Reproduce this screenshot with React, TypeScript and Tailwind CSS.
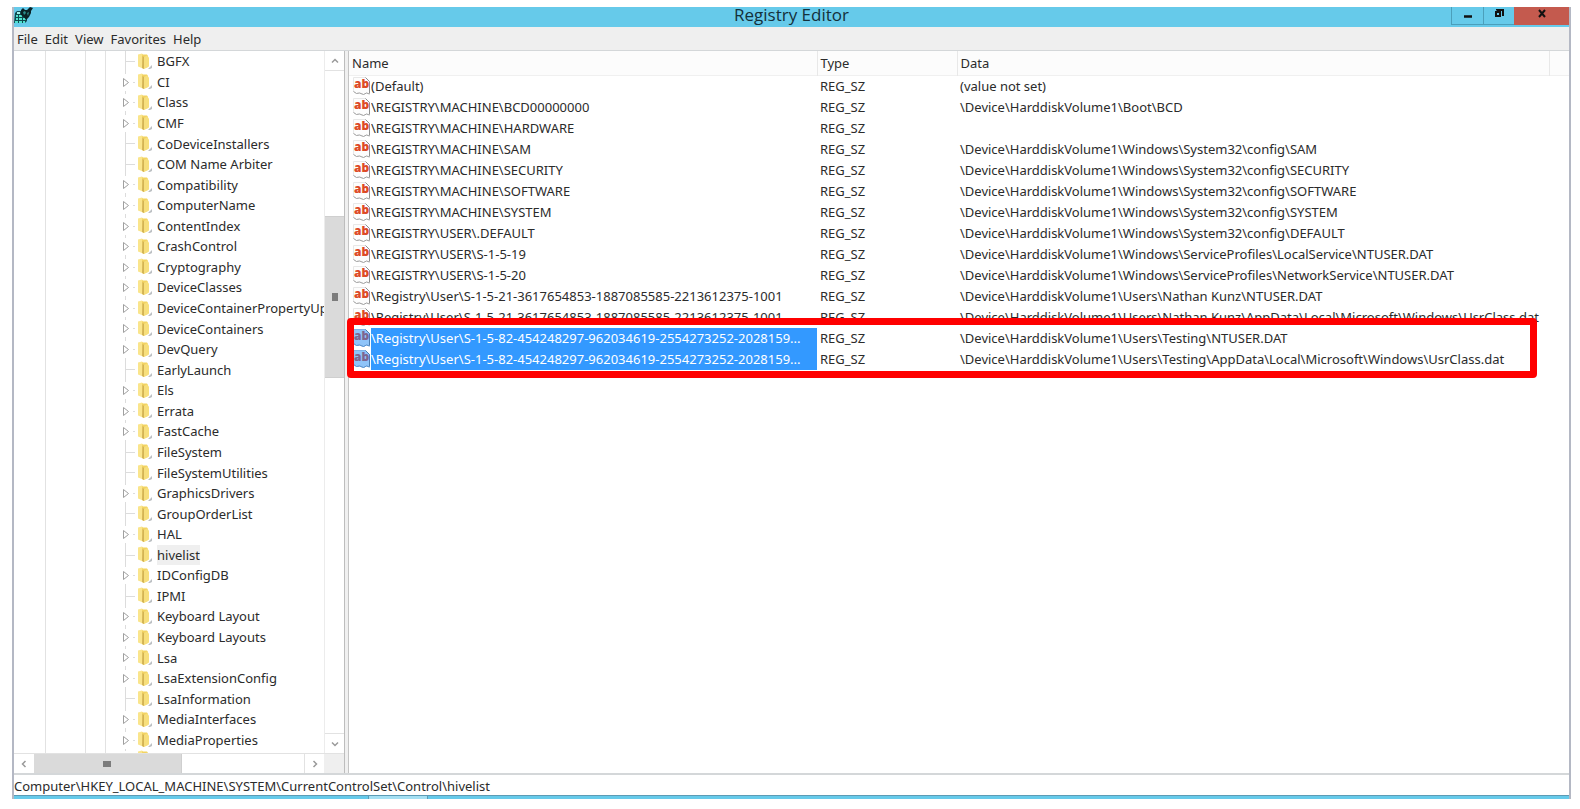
import React, { useState } from "react";
import clsx from "clsx";

interface TreeKey {
  name: string;
  leaf?: boolean;
}

interface RegistryValue {
  name: string;
  data: string;
  selected?: boolean;
}

const menus = ["File", "Edit", "View", "Favorites", "Help"];

const keys: TreeKey[] = [
  { name: "BGFX", leaf: true },
  { name: "CI" },
  { name: "Class" },
  { name: "CMF" },
  { name: "CoDeviceInstallers", leaf: true },
  { name: "COM Name Arbiter", leaf: true },
  { name: "Compatibility" },
  { name: "ComputerName" },
  { name: "ContentIndex" },
  { name: "CrashControl" },
  { name: "Cryptography" },
  { name: "DeviceClasses" },
  { name: "DeviceContainerPropertyUp" },
  { name: "DeviceContainers" },
  { name: "DevQuery" },
  { name: "EarlyLaunch", leaf: true },
  { name: "Els" },
  { name: "Errata" },
  { name: "FastCache" },
  { name: "FileSystem", leaf: true },
  { name: "FileSystemUtilities", leaf: true },
  { name: "GraphicsDrivers" },
  { name: "GroupOrderList", leaf: true },
  { name: "HAL" },
  { name: "hivelist", leaf: true },
  { name: "IDConfigDB" },
  { name: "IPMI", leaf: true },
  { name: "Keyboard Layout" },
  { name: "Keyboard Layouts" },
  { name: "Lsa" },
  { name: "LsaExtensionConfig" },
  { name: "LsaInformation", leaf: true },
  { name: "MediaInterfaces" },
  { name: "MediaProperties" },
];

const values: RegistryValue[] = [
  { name: "(Default)", data: "(value not set)" },
  { name: "\\REGISTRY\\MACHINE\\BCD00000000", data: "\\Device\\HarddiskVolume1\\Boot\\BCD" },
  { name: "\\REGISTRY\\MACHINE\\HARDWARE", data: "" },
  { name: "\\REGISTRY\\MACHINE\\SAM", data: "\\Device\\HarddiskVolume1\\Windows\\System32\\config\\SAM" },
  { name: "\\REGISTRY\\MACHINE\\SECURITY", data: "\\Device\\HarddiskVolume1\\Windows\\System32\\config\\SECURITY" },
  { name: "\\REGISTRY\\MACHINE\\SOFTWARE", data: "\\Device\\HarddiskVolume1\\Windows\\System32\\config\\SOFTWARE" },
  { name: "\\REGISTRY\\MACHINE\\SYSTEM", data: "\\Device\\HarddiskVolume1\\Windows\\System32\\config\\SYSTEM" },
  { name: "\\REGISTRY\\USER\\.DEFAULT", data: "\\Device\\HarddiskVolume1\\Windows\\System32\\config\\DEFAULT" },
  { name: "\\REGISTRY\\USER\\S-1-5-19", data: "\\Device\\HarddiskVolume1\\Windows\\ServiceProfiles\\LocalService\\NTUSER.DAT" },
  { name: "\\REGISTRY\\USER\\S-1-5-20", data: "\\Device\\HarddiskVolume1\\Windows\\ServiceProfiles\\NetworkService\\NTUSER.DAT" },
  {
    name: "\\Registry\\User\\S-1-5-21-3617654853-1887085585-2213612375-1001",
    data: "\\Device\\HarddiskVolume1\\Users\\Nathan Kunz\\NTUSER.DAT",
  },
  {
    name: "\\Registry\\User\\S-1-5-21-3617654853-1887085585-2213612375-1001",
    data: "\\Device\\HarddiskVolume1\\Users\\Nathan Kunz\\AppData\\Local\\Microsoft\\Windows\\UsrClass.dat",
  },
  {
    name: "\\Registry\\User\\S-1-5-82-454248297-962034619-2554273252-2028159...",
    data: "\\Device\\HarddiskVolume1\\Users\\Testing\\NTUSER.DAT",
    selected: true,
  },
  {
    name: "\\Registry\\User\\S-1-5-82-454248297-962034619-2554273252-2028159...",
    data: "\\Device\\HarddiskVolume1\\Users\\Testing\\AppData\\Local\\Microsoft\\Windows\\UsrClass.dat",
    selected: true,
  },
];

const RegeditIcon = () => (
  <svg className="h-[18px] w-5" viewBox="0 0 20 18" aria-hidden="true">
    <path d="M1 6l2-2h4l2 3h4v7l-2 2H0z" fill="#0e4a50" />
    <path d="M2 8h2v2H2zM5 8h3v2H5zM2 11h2v2H2zM5 11h3v2H5zM9 11h3v2H9zM1 14h3v2H1zM5 14h3v2H5zM9 14h2v2H9z" fill="#4fe3d0" />
    <path d="M3 5h3v2H3z" fill="#9df2ea" />
    <path d="M7 3l2-2 2 2 2 0 3-3 3 1-2 3 0 2-2 4-3 3-2-3-3-2z" fill="#0a2226" />
    <path d="M9 5l2-1 1 2-2 2zM13 6l2-1-1 4z" fill="#2a8d8c" />
  </svg>
);

const FolderIcon = () => (
  <svg className="h-[17px] w-4 shrink-0" viewBox="0 0 16 17" aria-hidden="true">
    <path d="M1 1.500l4-1 1 1v14l-5-2z" fill="#fae58c" />
    <path d="M5 1.500h5l1 1.500v11l-5 2z" fill="#f2d362" />
    <path d="M5.500 3l1.500 1v12l-2-1z" fill="#d3b354" />
    <path d="M7 4l3-1.500 2 2v9l-5 2.500z" fill="#f7df7c" />
    <path d="M11 16l4-4v3l-2 1z" fill="#bcc0c3" />
  </svg>
);

const StringIcon = ({ selected }: { selected?: boolean }) => (
  <svg className="h-5 w-[19px] shrink-0" viewBox="0 0 19 20" aria-hidden="true">
    <path
      d="M1.500 1.500h12l4 4v12.500l-3-1-3 1.500-4-1.500-3 .5-3-2z"
      fill={selected ? "#8fc4f9" : "#fdfdfd"}
      stroke={selected ? "#7fb2e6" : "#e8e8e8"}
    />
    <path d="M13.500 1.500l4 4v12" fill="none" stroke={selected ? "#4c7cae" : "#8f8f8f"} />
    <path d="M1.500 15.500l3 2 3-.5 4 1.500 3-1.500 3 1" fill="none" stroke={selected ? "#5b93cf" : "#a3a3a3"} />
    <text
      x="2"
      y="12"
      fontFamily="Open Sans, sans-serif"
      fontWeight="800"
      fontSize="12"
      fill={selected ? "#7d6590" : "#dd4a27"}
    >
      ab
    </text>
  </svg>
);

// Guide line and expander in front of a key
const Branch = ({ leaf }: { leaf?: boolean }) => (
  <svg className="h-[21px] w-[31px] shrink-0" viewBox="0 0 31 21" aria-hidden="true">
    {leaf ? (
      <path d="M19.500 0v21M20 10.500h9" fill="none" stroke="#dcdcdc" />
    ) : (
      <>
        <path d="M19.500 0v2M19.500 19v2M27 10.500h2" fill="none" stroke="#dcdcdc" />
        <path d="M17.500 6.500v8l5-4z" fill="#ffffff" stroke="#a0a0a0" />
      </>
    )}
  </svg>
);

const Chevron = ({ d }: { d: string }) => (
  <svg className="h-2 w-2" viewBox="0 0 8 8" aria-hidden="true">
    <path d={d} fill="none" stroke="#9a9a9a" strokeWidth="1.500" />
  </svg>
);

const Guides = () => (
  <>
    <span className="w-8 shrink-0 border-r border-[#e2e2e2]" />
    <span className="w-10 shrink-0 border-r border-[#e2e2e2]" />
    <span className="w-5 shrink-0 border-r border-[#e2e2e2]" />
  </>
);

const TitleBar = () => (
  <header className="flex h-5 bg-[#66caea]">
    <div className="flex-1">
      <RegeditIcon />
    </div>
    <h1 className="font-['Open_Sans',sans-serif] text-[17px] leading-4 text-[#14303a]">Registry Editor</h1>
    <div className="flex h-[18px] flex-1 justify-end">
      <button aria-label="Minimize" className="flex w-8 items-center justify-center border-b border-l border-[#4b9fbb]">
        <svg className="h-3 w-3" viewBox="0 0 12 12">
          <path d="M2 6.500h8" stroke="#111111" strokeWidth="2.500" />
        </svg>
      </button>
      <button aria-label="Restore" className="flex w-[31px] items-center justify-center border-b border-l border-[#4b9fbb] pb-1">
        <svg className="h-3 w-3" viewBox="0 0 12 12">
          <path d="M4 2.500V2h6v5H9" fill="none" stroke="#111111" strokeWidth="2" />
          <path d="M3 4h4v4H3z" fill="none" stroke="#111111" strokeWidth="2" />
        </svg>
      </button>
      <button aria-label="Close" className="flex w-[55px] items-center justify-center bg-[#c45a4e] pb-1">
        <svg className="h-3 w-3" viewBox="0 0 12 12">
          <path d="M3 2l6 7M9 2l-6 7" stroke="#111111" strokeWidth="2" />
        </svg>
      </button>
    </div>
  </header>
);

const KeyTree = () => {
  const [current, setCurrent] = useState("hivelist");

  return (
    <nav className="flex w-[331px] shrink-0 flex-col border-r border-[#bdbdbd]">
      <div className="flex min-h-0 flex-1">
        <ul className="flex min-w-0 flex-1 flex-col overflow-hidden">
          {keys.map((key) => (
            <li key={key.name} className="flex min-h-0 flex-1">
              <Guides />
              <Branch leaf={key.leaf} />
              <button onClick={() => setCurrent(key.name)} className="flex items-center gap-1 whitespace-nowrap">
                <FolderIcon />
                <span className={clsx("leading-5", current === key.name && "bg-[#efefef]")}>{key.name}</span>
              </button>
            </li>
          ))}
          <li className="flex h-[3px] shrink-0 overflow-hidden">
            <Guides />
            <span className="w-[31px] shrink-0" />
            <FolderIcon />
          </li>
        </ul>
        <div className="flex w-5 shrink-0 flex-col border-l border-[#ececec]">
          <button aria-label="Scroll up" className="flex h-5 items-center justify-center border-b border-[#e2e2e2]">
            <Chevron d="M1 5.500l3-3 3 3" />
          </button>
          <div className="flex flex-1 flex-col">
            <div className="flex-[146]" />
            <div className="flex flex-[160] items-center justify-center border-y border-[#cfcfcf] bg-[#dadada]">
              <span className="h-2 w-1.5 bg-[#7c7c7c]" />
            </div>
            <div className="flex-[357]" />
          </div>
          <button aria-label="Scroll down" className="flex h-5 items-center justify-center border-t border-[#e2e2e2]">
            <Chevron d="M1 2.500l3 3 3-3" />
          </button>
        </div>
      </div>
      <div className="flex h-5 border-t border-[#e2e2e2]">
        <button aria-label="Scroll left" className="flex w-5 items-center justify-center">
          <Chevron d="M5.500 1l-3 3 3 3" />
        </button>
        <div className="flex flex-1">
          <div className="flex flex-[148] items-center justify-center bg-[#dadada]">
            <span className="h-1.5 w-2 bg-[#7c7c7c]" />
          </div>
          <div className="flex-[123] border-l border-[#cfcfcf]" />
        </div>
        <button aria-label="Scroll right" className="flex w-5 items-center justify-center border-l border-[#e2e2e2]">
          <Chevron d="M2.500 1l3 3-3 3" />
        </button>
        <div className="w-5 bg-[#efefef]" />
      </div>
    </nav>
  );
};

const ValueList = () => (
  <main className="relative min-w-0 flex-1 border-l border-[#c4c4c4]">
    <table className="w-full table-fixed border-collapse text-left">
      <colgroup>
        <col className="w-[468px]" />
        <col className="w-[140px]" />
        <col />
        <col className="w-5" />
      </colgroup>
      <thead>
        <tr className="h-6 border-b border-[#f0f0f0] bg-[#fcfcfc]">
          <th className="border-r border-[#e8e8e8] p-0 pl-[3px] font-normal leading-5">Name</th>
          <th className="border-r border-[#e8e8e8] p-0 pl-[3px] font-normal leading-5">Type</th>
          <th className="border-r border-[#e8e8e8] p-0 pl-[3px] font-normal leading-5">Data</th>
          <th className="p-0" />
        </tr>
      </thead>
      <tbody>
        {values.map((value, index) => (
          <tr key={index} className="h-[21px]">
            <td className="p-0">
              <div className="flex h-[21px] items-center pl-[3px]">
                <StringIcon selected={value.selected} />
                <span
                  className={clsx(
                    "flex-1 overflow-hidden whitespace-nowrap leading-[21px]",
                    value.selected && "bg-[#3399ff] text-white"
                  )}
                >
                  {value.name}
                </span>
              </div>
            </td>
            <td className="p-0 pl-[3px] leading-[21px]">REG_SZ</td>
            <td className="whitespace-nowrap p-0 pl-[3px] leading-[21px]">{value.data}</td>
            <td className="p-0" />
          </tr>
        ))}
      </tbody>
    </table>
    {/* Callout around the two selected hives */}
    <div className="pointer-events-none absolute top-[267px] right-8 -left-0.5 h-[60px] rounded-sm border-[7px] border-[#ff0000]" />
  </main>
);

export default function App() {
  return (
    <div className="h-screen bg-white pt-[7px] pr-[9px] pb-[10px] pl-3 font-['Noto_Sans','Open_Sans',sans-serif] text-[13px] text-[#2b2b2b]">
      <div className="flex h-full flex-col border-x-2 border-[#b4b8c4]">
        <TitleBar />
        <div className="flex h-[23px] items-center gap-[7px] bg-[#efefef] pt-0.5 pl-[3px]">
          {menus.map((menu) => (
            <button key={menu}>{menu}</button>
          ))}
        </div>
        <div className="flex min-h-0 flex-1 gap-[3px] border-t border-b-2 border-[#d4d7d9] bg-[#f0f0f0] *:bg-white">
          <KeyTree />
          <ValueList />
        </div>
        <footer className="h-5 leading-[22px]">Computer\HKEY_LOCAL_MACHINE\SYSTEM\CurrentControlSet\Control\hivelist</footer>
        <div className="flex h-1 border-t border-[#5c9bb5] bg-[#66caea]">
          <span className="w-[354px]" />
          <span className="w-[60px] border-x border-[#5c9bb5] bg-[#a5e0f3]" />
        </div>
      </div>
    </div>
  );
}
